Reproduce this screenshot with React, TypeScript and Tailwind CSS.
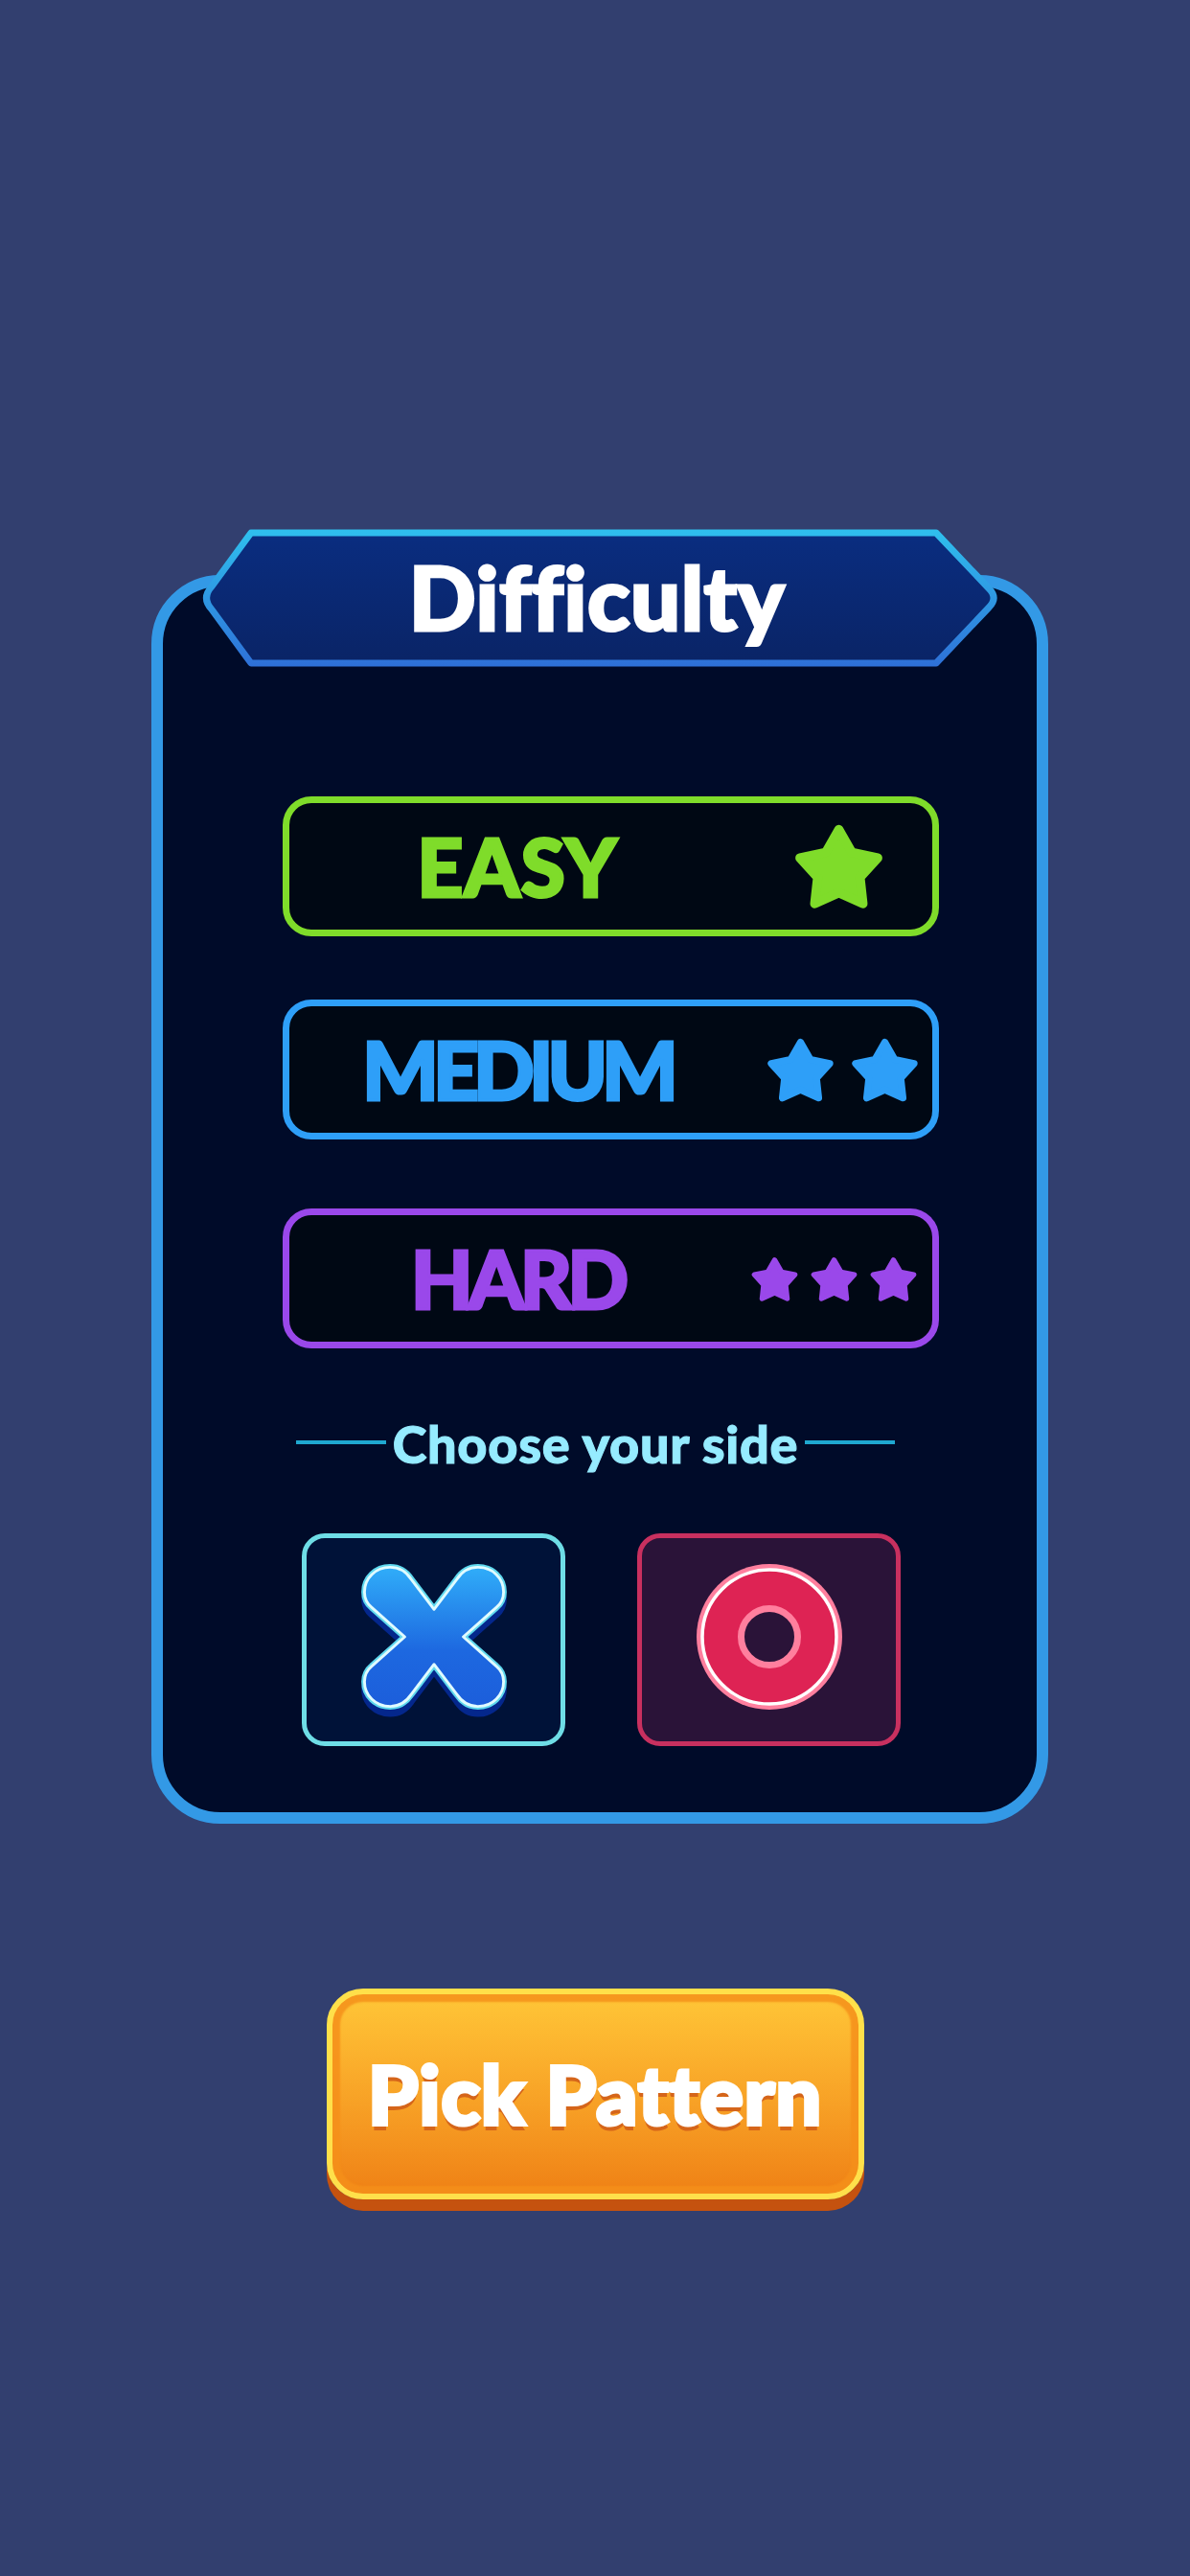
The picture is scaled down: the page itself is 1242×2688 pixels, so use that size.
function Star({ size, color }: { size: number; color: string }) {
  return (
    <svg width={size} height={size * 0.96} viewBox="0 0 100 96" className="flex-shrink-0">
      <polygon
        points="50,9 64.1,33.6 91.8,39.4 72.8,60.4 75.9,88.6 50,77 24.1,88.6 27.2,60.4 8.2,39.4 35.9,33.6"
        fill={color}
        stroke={color}
        strokeWidth="10"
        strokeLinejoin="round"
      />
    </svg>
  )
}

function HeaderShape() {
  return (
    <svg viewBox="0 0 828 144" className="absolute inset-0 w-full h-full overflow-visible">
      <defs>
        <linearGradient id="headerFill" x1="0" y1="0" x2="0" y2="1">
          <stop offset="0" stopColor="#0a2d80" />
          <stop offset="1" stopColor="#0a2466" />
        </linearGradient>
        <linearGradient id="headerStroke" gradientUnits="userSpaceOnUse" x1="0" y1="0" x2="0" y2="144">
          <stop offset="0" stopColor="#2fc0ee" />
          <stop offset="1" stopColor="#2e70d8" />
        </linearGradient>
      </defs>
      <path
        d="M50 4 L765 4 L820 62 Q830 72 820 82 L765 140 L50 140 L9 84 Q-2 72 9 60 Z"
        fill="url(#headerFill)"
        stroke="url(#headerStroke)"
        strokeWidth="7"
        strokeLinejoin="round"
      />
    </svg>
  )
}

function XMark() {
  const d =
    'M76 46 L51 13 C45 4 36 0 28 0 C12 0 0 12 0 27 C0 33 2 39 8 44 L44 76 L8 108 C2 113 0 119 0 125 C0 140 12 152 28 152 C36 152 45 148 51 139 L76 106 L101 139 C107 148 116 152 124 152 C140 152 152 140 152 125 C152 119 150 113 144 108 L108 76 L144 44 C150 39 152 33 152 27 C152 12 140 0 124 0 C116 0 107 4 101 13 Z'
  return (
    <svg width="152" height="162" viewBox="0 0 152 162">
      <defs>
        <linearGradient id="xFill" gradientUnits="userSpaceOnUse" x1="0" y1="0" x2="0" y2="152">
          <stop offset="0" stopColor="#30adf9" />
          <stop offset="0.6" stopColor="#1d68e0" />
          <stop offset="1" stopColor="#1c5edb" />
        </linearGradient>
      </defs>
      <g transform="translate(76 76) scale(0.955) translate(-76 -76)">
        <path d={d} transform="translate(0 8)" fill="#04278c" stroke="#04278c" strokeWidth="7" strokeLinejoin="round" />
        <path d={d} fill="#5ed8ee" stroke="#5ed8ee" strokeWidth="7" strokeLinejoin="round" />
        <path d={d} fill="url(#xFill)" stroke="#e0fbff" strokeWidth="3" strokeLinejoin="round" />
      </g>
    </svg>
  )
}

function OMark() {
  return (
    <svg width="152" height="152" viewBox="0 0 152 152">
      <circle cx="76" cy="76" r="76" fill="#ff7f9e" />
      <circle cx="76" cy="76" r="70" fill="#de2354" stroke="#fff" strokeWidth="3.5" />
      <circle cx="76" cy="76" r="29.5" fill="#2a1338" stroke="#ff7f9e" strokeWidth="7" />
    </svg>
  )
}

const levels = [
  {
    label: 'EASY',
    border: 'border-[#7fdc2a]',
    text: 'text-[#7fdc2a] tracking-[0.5px]',
    color: '#7fdc2a',
    stars: 1,
    size: 97,
    gap: 'gap-0',
    offset: 'ml-[49px]',
    spacing: 'mb-[66px]',
  },
  {
    label: 'MEDIUM',
    border: 'border-[#2e9ff8]',
    text: 'text-[#2e9ff8] tracking-[-6px]',
    color: '#2e9ff8',
    stars: 2,
    size: 73,
    gap: 'gap-[15px]',
    offset: 'ml-[21px]',
    spacing: 'mb-[72px]',
  },
  {
    label: 'HARD',
    border: 'border-[#9a48ea]',
    text: 'text-[#9a48ea] tracking-[-5px]',
    color: '#9a48ea',
    stars: 3,
    size: 51,
    gap: 'gap-[11px]',
    offset: 'ml-[5px]',
    spacing: 'mb-[73px]',
  },
]

export default function App() {
  return (
    <div className="w-[1242px] h-[2688px] bg-[#323f6f] flex flex-col items-center pt-[600px] [font-family:Lato,sans-serif] [font-variant-ligatures:none]">
      <div className="relative w-[936px] h-[1303px] ml-[10px] border-[12px] border-[#3399e6] rounded-[72px] bg-[#000b29] pt-[219px] pl-[125px]">
        <div className="absolute -top-[60px] left-[42px] w-[828px] h-[144px] flex items-center justify-center">
          <HeaderShape />
          <span className="relative text-white text-[92px] font-black leading-none tracking-[0.5px] [-webkit-text-stroke:3px_white] pb-[2px] mr-[6px]">
            Difficulty
          </span>
        </div>

        {levels.map((level) => (
          <div
            key={level.label}
            className={`w-[685px] h-[146px] rounded-[30px] border-[7px] bg-[#000814] flex items-center ${level.border} ${level.spacing}`}
          >
            <span
              className={`w-[476px] text-center text-[84px] font-black leading-none [-webkit-text-stroke:3px_currentColor] ${level.text}`}
            >
              {level.label}
            </span>
            <div className={`flex items-center ${level.gap} ${level.offset}`}>
              {Array.from({ length: level.stars }).map((_, i) => (
                <Star key={i} size={level.size} color={level.color} />
              ))}
            </div>
          </div>
        ))}

        <div className="w-[625px] ml-[14px] -mt-[3px] h-[56px] flex items-center gap-[7px]">
          <div className="flex-1 h-[4px] bg-[#1fa8d0]" />
          <span className="text-[#96ebff] text-[54px] font-black leading-none tracking-[0.7px] whitespace-nowrap [-webkit-text-stroke:1px_currentColor] pt-[3px]">
            Choose your side
          </span>
          <div className="flex-1 h-[4px] bg-[#1fa8d0]" />
        </div>

        <div className="flex gap-[75px] ml-[20px] mt-[67px]">
          <div className="w-[275px] h-[222px] rounded-[24px] border-[5px] border-[#6edde6] bg-[#001238] flex items-center justify-center pt-[3px]">
            <XMark />
          </div>
          <div className="w-[275px] h-[222px] rounded-[24px] border-[5px] border-[#c8305f] bg-[#2a1338] flex items-center justify-center pb-[6px]">
            <OMark />
          </div>
        </div>
      </div>

      <div className="mt-[172px] w-[561px] h-[220px] rounded-[38px] border-[6px] border-[#ffe04a] bg-gradient-to-b from-[#ffc637] to-[#ef8115] shadow-[0_12px_0_#c5520f,inset_0_0_2px_8px_#f58f1ad9] flex items-center justify-center">
        <span className="text-white text-[84px] font-black leading-none tracking-[1px] [-webkit-text-stroke:4px_white] [text-shadow:0_6px_0_#d5651a]">
          Pick Pattern
        </span>
      </div>
    </div>
  )
}
